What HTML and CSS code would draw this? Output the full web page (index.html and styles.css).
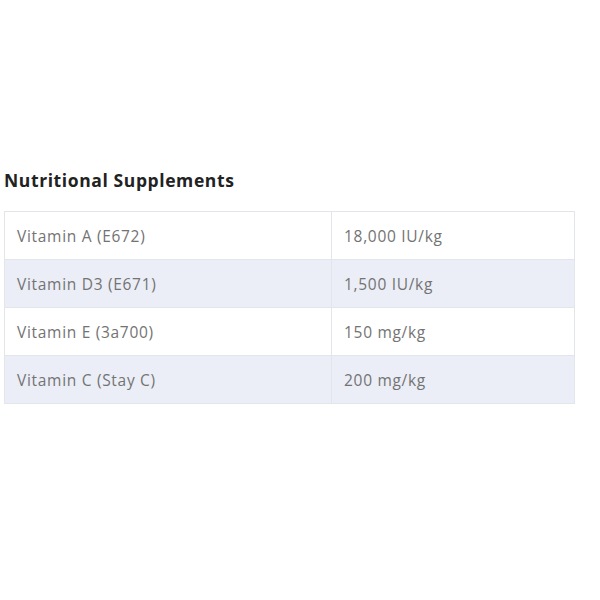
FILE: index.html
```html
<!DOCTYPE html>
<html>
<head>
<meta charset="utf-8">
<link rel="stylesheet" href="styles.css">
</head>
<body>
<section class="supplements">
  <h2 class="title">Nutritional Supplements</h2>
  <table class="table">
    <tr><td class="name">Vitamin A (E672)</td><td class="value">18,000 IU/kg</td></tr>
    <tr class="alt"><td class="name">Vitamin D3 (E671)</td><td class="value">1,500 IU/kg</td></tr>
    <tr><td class="name">Vitamin E (3a700)</td><td class="value">150 mg/kg</td></tr>
    <tr class="alt"><td class="name">Vitamin C (Stay C)</td><td class="value">200 mg/kg</td></tr>
  </table>
</section>
</body>
</html>
```
FILE: styles.css
```css
html, body { margin: 0; padding: 0; background: #fff; }
body { font-family: "Open Sans", "Liberation Sans", sans-serif; }
.supplements { padding: 170px 25px 0 4px; }
.title {
  margin: 0 0 20px 0;
  font-size: 17.5px;
  font-weight: 700;
  color: #222;
  line-height: 21px;
  letter-spacing: 0.6px;
}
.table {
  width: 100%;
  border-collapse: collapse;
  border: 1px solid #e2e5ea;
}
.table td {
  height: 47px;
  padding: 0 0 0 12px;
  font-size: 15.5px;
  color: #737373;
  border-top: 1px solid #e2e5ea;
  vertical-align: middle;
  letter-spacing: 0.7px;
}
.table .name { width: 314px; border-right: 1px solid #e2e5ea; }
.alt td { background: #ebeef6; }
```
